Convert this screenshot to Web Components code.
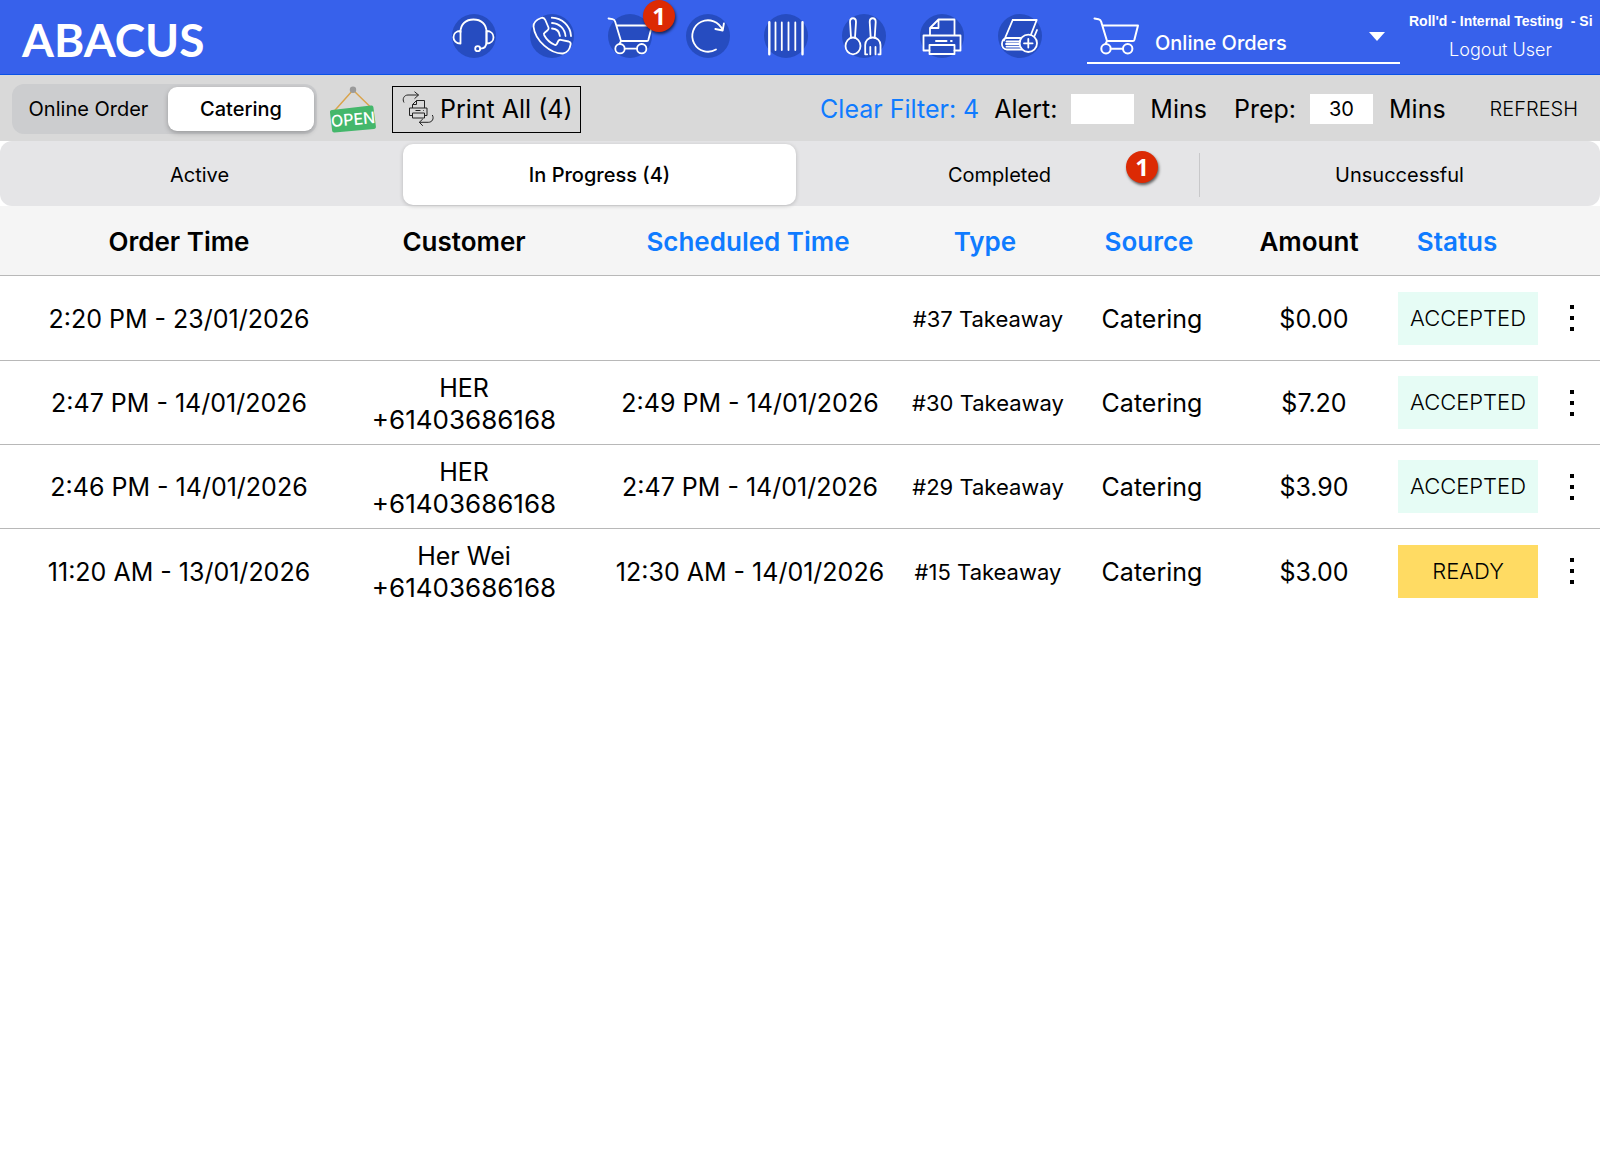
<!DOCTYPE html>
<html lang="en">
<head>
<meta charset="utf-8">
<meta name="viewport" content="width=device-width, initial-scale=1">
<title>Abacus - Online Orders</title>
<style>
    body {
        margin: 0;
        background: #fff;
        color: #000;
        font-family: Inter, "Liberation Sans", sans-serif;
    }
</style>
</head>
<body>
<app-header>
    <icon-button slot="nav" icon="headset" label="Support"></icon-button>
    <icon-button slot="nav" icon="phone" label="Phone"></icon-button>
    <icon-button slot="nav" icon="cart" label="Online orders"><count-badge>1</count-badge></icon-button>
    <icon-button slot="nav" icon="reload" label="Reload"></icon-button>
    <icon-button slot="nav" icon="barcode" label="Barcode"></icon-button>
    <icon-button slot="nav" icon="cutlery" label="Tables"></icon-button>
    <icon-button slot="nav" icon="printer" label="Printer"></icon-button>
    <icon-button slot="nav" icon="book" label="Menu book"></icon-button>
    <span slot="store">Roll'd - Internal Testing &nbsp;- Si</span>
</app-header>
<filter-bar></filter-bar>
<status-tabs>
    <status-tab>Active</status-tab>
    <status-tab selected>In Progress (4)</status-tab>
    <status-tab>Completed<count-badge slot="badge">1</count-badge></status-tab>
    <status-tab divider>Unsuccessful</status-tab>
</status-tabs>
<order-table></order-table>

<script>
const icons = {
    headset: `
        <path d="M8.5 18C8.5 10 14 5.5 21.5 5.5S34.5 10 34.5 18v10c0 4-2 6.5-6 6.7"/>
        <path d="M8.5 17v12.5C4 29.5 1.5 26.5 1.5 23.2S4 17 8.5 17zM34.5 17v12.5c4.5 0 7-3 7-6.3S39 17 34.5 17z"/>
        <circle cx="25.7" cy="34.7" r="2.5"/>`,
    phone: `
        <path d="M11 4c1.800-.7 3.500.2 4.300 2l3.200 7.500c.5 1.300 0 2-.9 2.700l-3 2.500c-.9.7-.9 1.500-.4 2.500 2.300 4.200 6 7.600 10.300 9.500 1 .5 1.800.2 2.300-.7l1.500-3c.5-1 1.300-1.400 2.400-1.200l8 1.700c1.600.4 2.200 1.500 1.900 3-.8 4.500-3.600 8.600-7.600 9C21 40 5 27 3.500 12.500 3.300 8.500 7.300 5.500 11 4z"/>
        <path d="M22 14.500c4.500.3 7.500 3.200 7.900 7.500M22 9c7.500.5 12.800 5.500 13.500 13M21.800 3.700C32 4 40.500 12 41 22"/>`,
    cart: `
        <path d="M.5 4.500l4 .7c1.600.3 2.200 1 2.600 2.400L13 27h26c.9 0 1.200-.5 1.400-1.200L44 11.500H8.500M13 27l-1.500 3"/>
        <circle cx="12" cy="34.700" r="4.700"/>
        <circle cx="33.700" cy="34.700" r="4.700"/>
        <path d="M16.700 34.700H29"/>`,
    reload: `
        <path d="M30 35.500A15.700 15.700 0 1 1 36.500 16M29.300 15l7.400 1.500 1.200-7"/>`,
    barcode: `
        <path stroke-width="2.400" d="M5.300 8.300v32M38.500 8.300v32"/>
        <path d="M11.500 8.500v27.500M17.800 8.500v27.500M24.500 8.500v27.500M31.300 8.500v27.500"/>`,
    cutlery: `
        <path d="M9 23.500L8 8c0-5 6-5 6 0l-1 15.500"/>
        <path d="M11 23.500c4.500 0 7.500 4.500 7.500 8.500s-3 8.300-7.500 8.300S3.500 36 3.500 32s3-8.500 7.500-8.500z"/>
        <path d="M28.700 23.500l-1-15.500c0-5 6-5 6 0l-1 15.500"/>
        <path d="M23.200 40.300V31c0-4.500 3.300-7.500 7.500-7.500s7.800 3 7.800 7.500v9.300h-2M28.300 33v7.300M33.500 33v7.300M23.200 40.300h2"/>`,
    printer: `
        <path d="M10 21V14l8.500-8.500h16V21M18.500 5.500V14H10"/>
        <path d="M9.500 36.500h-6v-15h37v15h-6"/>
        <rect x="9.500" y="31" width="25" height="9"/>
        <path stroke-width="2" d="M16 27h10.500M31 27h.7"/>`,
    book: `
        <path d="M14.700 6h24L33 20.500M14.700 6L6 26.500M39 16l-2.500 6M22.500 24H9c-6.500 0-7 11.500 0 11.500h15M8.500 27.500H22M8 30h13.500M8.500 32.700H22"/>
        <circle cx="30.300" cy="29.300" r="8.700"/>
        <path d="M30.300 25v8.600M26 29.300h8.600"/>`
};

class countBadge extends HTMLElement {
    constructor() {
        super();
        this.attachShadow({ mode : 'open' });
    }
    connectedCallback() {
        this.shadowRoot.innerHTML = `
            <slot></slot>
            <style>
                :host {
                    display: flex;
                    align-items: center;
                    justify-content: center;
                    width: 32px;
                    height: 32px;
                    border-radius: 50%;
                    background: #dc2a04;
                    box-shadow: 1px 2px 3px rgba(0, 0, 0, .6);
                    color: #fff;
                    font: 700 24px/32px "Noto Sans", sans-serif;
                }
            </style>
        `;
    }
}

class iconButton extends HTMLElement {
    constructor() {
        super();
        this.attachShadow({ mode : 'open' });
    }
    connectedCallback() {
        this.shadowRoot.innerHTML = `
            <button aria-label="${this.getAttribute('label')}">
                <svg viewBox="0 0 44 44">${icons[this.getAttribute('icon')]}</svg>
            </button>
            <slot></slot>
            <style>
                :host {
                    display: block;
                    position: relative;
                }
                button {
                    display: block;
                    width: 44px;
                    height: 44px;
                    padding: 0;
                    border: none;
                    border-radius: 50%;
                    background: #264cc0;
                }
                svg {
                    display: block;
                    overflow: visible;
                    fill: none;
                    stroke: #fff;
                    stroke-width: 1.8;
                    stroke-linecap: round;
                    stroke-linejoin: round;
                }
                ::slotted(count-badge) {
                    position: absolute;
                    top: -14px;
                    left: 35px;
                }
            </style>
        `;
    }
}

class appHeader extends HTMLElement {
    constructor() {
        super();
        this.attachShadow({ mode : 'open' });
    }
    connectedCallback() {
        this.shadowRoot.innerHTML = `
            <header>
                <div class="logo">ABACUS</div>
                <nav><slot name="nav"></slot></nav>
                <label class="section">
                    <svg class="cart" viewBox="0 0 44 44">${icons.cart}</svg>
                    <select aria-label="Section">
                        <option>Online Orders</option>
                    </select>
                    <svg class="arrow" viewBox="0 0 16 9"><path d="M0 0h16L8 9z"/></svg>
                </label>
                <div class="account">
                    <div class="store"><slot name="store"></slot></div>
                    <a href="#logout">Logout User</a>
                </div>
            </header>
            ${this.getStyles()}
        `;
    }
    getStyles() {
        return `
            <style>
                :host {
                    display: block;
                    background: #3761eb;
                    color: #fff;
                }
                header {
                    display: flex;
                    align-items: center;
                    height: 74px;
                    padding: 0 8px 0 22px;
                    border-bottom: 1px solid #0b52e6;
                }
                .logo {
                    flex: 1;
                    padding-top: 6px;
                    font: 700 46px/48px Lato, sans-serif;
                }
                nav {
                    display: flex;
                    gap: 34px;
                    padding-bottom: 2px;
                }
                .section {
                    display: flex;
                    align-items: center;
                    box-sizing: border-box;
                    width: 313px;
                    height: 54px;
                    margin: 0 9px 0 45px;
                    padding: 0 15px 0 7px;
                    border-bottom: 2px solid #fff;
                }
                .cart {
                    flex: none;
                    width: 44px;
                    overflow: visible;
                    fill: none;
                    stroke: #fff;
                    stroke-width: 2;
                    stroke-linecap: round;
                    stroke-linejoin: round;
                }
                select {
                    flex: 1;
                    min-width: 0;
                    margin: 14px 0 0 17px;
                    padding: 0;
                    border: none;
                    background: none;
                    appearance: none;
                    color: inherit;
                    font: 500 20px/24px Inter, sans-serif;
                }
                .arrow {
                    width: 16px;
                    fill: #fff;
                }
                .account {
                    width: 183px;
                    padding-bottom: 1px;
                    text-align: center;
                }
                .store {
                    text-align: left;
                    white-space: nowrap;
                    font: 700 14px/20px "Liberation Sans", sans-serif;
                }
                a {
                    display: block;
                    margin-top: 7px;
                    color: inherit;
                    text-decoration: none;
                    font: 300 18px/24px Inter, sans-serif;
                }
            </style>
        `;
    }
}

class filterBar extends HTMLElement {
    constructor() {
        super();
        this.attachShadow({ mode : 'open' });
    }
    connectedCallback() {
        this.shadowRoot.innerHTML = `
            <div class="segments">
                <button>Online Order</button>
                <button class="selected">Catering</button>
            </div>
            <svg class="sign" viewBox="0 0 48 48">
                <path fill="none" stroke="#d9a44c" stroke-width="1.500" d="M5.300 26L24 5l18.500 18"/>
                <circle cx="24" cy="4.700" r="3.200" fill="#9a9a9a"/>
                <path fill="#44b76b" d="M3 25l39-4.600c1.300-.1 2.200.5 2.400 1.800l2.500 19.300c.2 1.500-.6 2.400-2 2.600L5.500 47.500c-1.500.1-2.200-.5-2.400-1.900L1 27.500C.8 26 1.500 25.200 3 25z"/>
                <text x="24" y="40" transform="rotate(-5 24 34)" text-anchor="middle" fill="#fff">OPEN</text>
            </svg>
            <button class="print">
                <svg viewBox="0 0 32 36">
                    <path d="M2 11.500C0 8 2 4 6 4h10.500M12.500.7L16.500 4l-4 3.700M30.300 24c2 3.500 0 7.300-4 7.300h-9M20.800 28l-3.500 3.300 3.500 3.500"/>
                    <path d="M10.500 17v-3.500l4-4h8V17M14.500 9.500v4h-4M10.500 24.500h-3V17H25v7.500h-2.500M10.500 22h12v5h-12zM13.500 19.500h5M21 19.500h.7"/>
                </svg>
                Print All (4)
            </button>
            <button class="clear">Clear Filter: 4</button>
            <div class="field">
                <label for="alert">Alert:</label>
                <input id="alert" type="text" value="">
                <span>Mins</span>
            </div>
            <div class="field">
                <label for="prep">Prep:</label>
                <input id="prep" type="text" value="30">
                <span>Mins</span>
            </div>
            <button class="refresh">REFRESH</button>
            ${this.getStyles()}
        `;
    }
    getStyles() {
        return `
            <style>
                :host {
                    display: flex;
                    align-items: center;
                    height: 64px;
                    padding: 2px 22px 0 12px;
                    background: #d9d9d9;
                    font-size: 25px;
                    line-height: 32px;
                    white-space: nowrap;
                }
                button {
                    padding: 0;
                    border: none;
                    background: none;
                    color: inherit;
                    font: inherit;
                }
                .segments {
                    display: flex;
                    box-sizing: border-box;
                    height: 50px;
                    padding: 3px;
                    border-radius: 12px;
                    background: #cccdcf;
                }
                .segments button {
                    box-sizing: border-box;
                    width: 153px;
                    padding-right: 6px;
                    border-radius: 9px;
                    font-size: 20px;
                }
                .segments .selected {
                    width: 146px;
                    padding: 0;
                    background: #fff;
                    box-shadow: 0 2px 5px rgba(0, 0, 0, .25);
                    font-weight: 500;
                }
                .sign {
                    width: 48px;
                    margin: 0 15px 0 12px;
                    font: 500 16px Inter, sans-serif;
                }
                .print {
                    display: flex;
                    align-items: center;
                    gap: 6px;
                    height: 47px;
                    padding: 0 7px 0 9px;
                    border: 1px solid #000;
                }
                .print svg {
                    width: 32px;
                    fill: none;
                    stroke: #222;
                    stroke-width: 1;
                }
                .clear {
                    margin: 0 15px 0 auto;
                    color: #0f7bff;
                }
                .field {
                    display: flex;
                    align-items: center;
                    margin-right: 27px;
                }
                input {
                    box-sizing: border-box;
                    width: 63px;
                    height: 30px;
                    margin: 0 16px 0 14px;
                    padding: 0;
                    border: none;
                    border-radius: 0;
                    background: #fff;
                    text-align: center;
                    font: 400 20px/30px Inter, sans-serif;
                }
                .refresh {
                    margin-left: 17px;
                    font-size: 20px;
                    font-weight: 300;
                }
            </style>
        `;
    }
}

class statusTabs extends HTMLElement {
    constructor() {
        super();
        this.attachShadow({ mode : 'open' });
    }
    connectedCallback() {
        this.shadowRoot.innerHTML = `
            <slot></slot>
            <style>
                :host {
                    display: grid;
                    grid-template-columns: repeat(4, 1fr);
                    height: 65px;
                    border-radius: 12px;
                    background: #e5e5e7;
                }
            </style>
        `;
    }
}

class statusTab extends HTMLElement {
    constructor() {
        super();
        this.attachShadow({ mode : 'open' });
    }
    connectedCallback() {
        this.shadowRoot.innerHTML = `
            <button><slot></slot></button>
            <slot name="badge"></slot>
            <style>
                :host {
                    display: flex;
                    position: relative;
                    padding: 3px 4px 1px 3px;
                }
                :host([divider])::before {
                    content: "";
                    align-self: center;
                    width: 1px;
                    height: 44px;
                    margin: 0 3px 0 -4px;
                    background: #c8c8ca;
                }
                button {
                    flex: 1;
                    padding: 0;
                    border: none;
                    border-radius: 10px;
                    background: none;
                    color: #000;
                    font: 400 20px/24px Inter, sans-serif;
                }
                :host([selected]) button {
                    background: #fff;
                    box-shadow: 0 1px 4px rgba(0, 0, 0, .2);
                    font-weight: 500;
                }
                ::slotted(count-badge) {
                    position: absolute;
                    top: 10px;
                    right: 42px;
                }
            </style>
        `;
    }
}

class orderTable extends HTMLElement {
    constructor() {
        super();
        this.attachShadow({ mode : 'open' });
        this.orders = [
            { time : '2:20 PM - 23/01/2026', name : '', phone : '', scheduled : '', type : '#37 Takeaway', amount : '$0.00', status : 'ACCEPTED' },
            { time : '2:47 PM - 14/01/2026', name : 'HER', phone : '+61403686168', scheduled : '2:49 PM - 14/01/2026', type : '#30 Takeaway', amount : '$7.20', status : 'ACCEPTED' },
            { time : '2:46 PM - 14/01/2026', name : 'HER', phone : '+61403686168', scheduled : '2:47 PM - 14/01/2026', type : '#29 Takeaway', amount : '$3.90', status : 'ACCEPTED' },
            { time : '11:20 AM - 13/01/2026', name : 'Her Wei', phone : '+61403686168', scheduled : '12:30 AM - 14/01/2026', type : '#15 Takeaway', amount : '$3.00', status : 'READY' },
        ];
    }
    getRow(order) {
        return `
            <tr>
                <td class="time">${order.time}</td>
                <td><div>${order.name}</div><div class="phone">${order.phone}</div></td>
                <td class="shift">${order.scheduled}</td>
                <td class="type">${order.type}</td>
                <td>Catering</td>
                <td class="shift">${order.amount}</td>
                <td class="action"><button class="status ${order.status.toLowerCase()}">${order.status}</button></td>
                <td class="action">
                    <button class="more" aria-label="More">
                        <svg viewBox="0 0 4 26"><path d="M0 0h4v4H0zM0 11h4v4H0zM0 22h4v4H0z"/></svg>
                    </button>
                </td>
            </tr>
        `;
    }
    connectedCallback() {
        this.shadowRoot.innerHTML = `
            <table>
                <colgroup>
                    <col style="width: 21%">
                    <col style="width: 16%">
                    <col style="width: 19.5%">
                    <col style="width: 10.5%">
                    <col style="width: 10%">
                    <col style="width: 10%">
                    <col style="width: 9.5%">
                    <col style="width: 3.5%">
                </colgroup>
                <thead>
                    <tr>
                        <th class="time">Order Time</th>
                        <th>Customer</th>
                        <th><button class="sort">Scheduled Time</button></th>
                        <th class="source"><button class="sort">Type</button></th>
                        <th class="source"><button class="sort">Source</button></th>
                        <th class="source">Amount</th>
                        <th class="state"><button class="sort">Status</button></th>
                        <th></th>
                    </tr>
                </thead>
                <tbody>${this.orders.map(order => this.getRow(order)).join('')}</tbody>
            </table>
            ${this.getStyles()}
        `;
    }
    getStyles() {
        return `
            <style>
                :host {
                    display: block;
                }
                table {
                    width: 100%;
                    table-layout: fixed;
                    border-collapse: separate;
                    border-spacing: 0;
                    font-size: 25px;
                    line-height: 31px;
                    text-align: center;
                    white-space: nowrap;
                }
                th, td {
                    box-sizing: border-box;
                    padding: 2px 0 0;
                    border-bottom: 1px solid #b8b8b8;
                }
                th {
                    height: 70px;
                    background: #f5f5f5;
                    font-size: 26px;
                    font-weight: 600;
                }
                td {
                    height: 84px;
                }
                tbody tr:first-child td {
                    height: 85px;
                }
                tbody tr:last-child td {
                    border-bottom: none;
                }
                .time {
                    padding-left: 22px;
                }
                .phone {
                    font-size: 26px;
                }
                .shift {
                    padding-left: 4px;
                }
                .source {
                    padding-right: 6px;
                }
                .state {
                    padding-right: 22px;
                }
                .action {
                    padding: 0;
                }
                button {
                    padding: 0;
                    border: none;
                    background: none;
                    color: inherit;
                    font: inherit;
                }
                .sort {
                    color: #0f7bff;
                }
                .type {
                    font-size: 22px;
                }
                .status {
                    width: 140px;
                    height: 53px;
                    font-size: 22px;
                    font-weight: 300;
                }
                .accepted {
                    background: #e6fcf5;
                }
                .ready {
                    background: #ffdb63;
                }
                .more {
                    padding: 8px;
                }
                .more svg {
                    display: block;
                    width: 4px;
                    height: 26px;
                }
            </style>
        `;
    }
}

customElements.define('count-badge', countBadge);
customElements.define('icon-button', iconButton);
customElements.define('app-header', appHeader);
customElements.define('filter-bar', filterBar);
customElements.define('status-tabs', statusTabs);
customElements.define('status-tab', statusTab);
customElements.define('order-table', orderTable);
</script>
</body>
</html>
